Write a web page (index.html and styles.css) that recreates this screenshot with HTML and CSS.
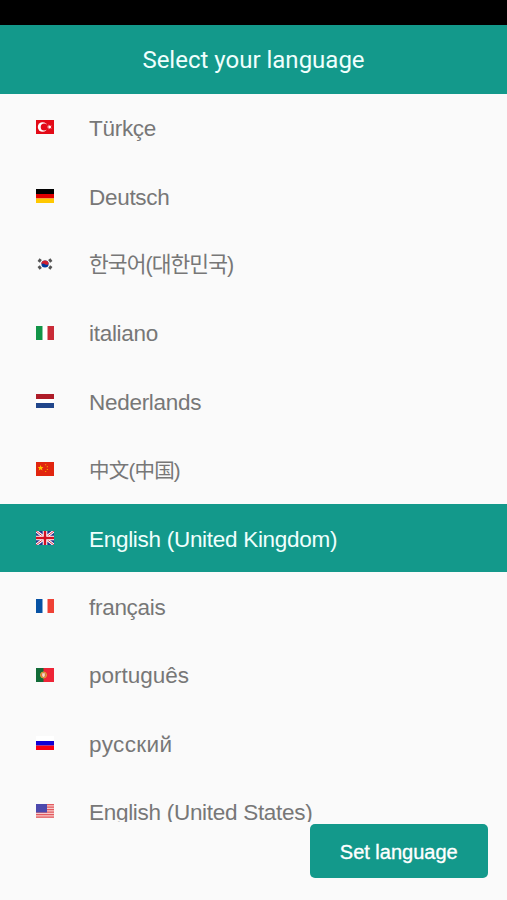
FILE: index.html
```html
<!DOCTYPE html>
<html lang="en">
<head>
<meta charset="utf-8">
<title>Select your language</title>
<link rel="stylesheet" href="styles.css">
</head>
<body>
<div class="status-bar"></div>
<header class="header"><h1 class="title">Select your language</h1></header>
<ul class="languages">
  <li class="language">
    <svg class="flag" viewBox="0 0 18 14"><path fill="#e30a17" d="M0 0h18v14H0z"/><circle cx="6.6" cy="7" r="4.8" fill="#fff"/><circle cx="8.2" cy="7" r="3.5" fill="#e30a17"/><path fill="#fff" d="M10.8 7l1.8-.6.1-1.9 1.2 1.6 1.8-.6-1.1 1.5 1.1 1.5-1.8-.6-1.2 1.6V7.6z"/></svg>
    <span class="name" lang="tr">Türkçe</span>
  </li>
  <li class="language">
    <svg class="flag" viewBox="0 0 18 14"><path d="M0 0h18v5H0z"/><path fill="#e00000" d="M0 5h18v4.5H0z"/><path fill="#ffc800" d="M0 9.5h18V14H0z"/></svg>
    <span class="name" lang="de">Deutsch</span>
  </li>
  <li class="language">
    <svg class="flag" viewBox="0 0 18 14"><circle cx="9" cy="7" r="3.6" fill="#003a9c"/><path fill="#d02030" d="M5.4 7a3.6 3.6 0 0 1 7.2 0Q10.8 8.6 9 7.2 7.2 5.8 5.4 7z"/><path stroke="#555" stroke-width="2.8" d="M2.7 4.9l2-2.8M13.3 2.1l2 2.8M2.7 9.1l2 2.8M13.3 11.9l2-2.8"/></svg>
    <span class="name korean" lang="ko">한국어(대한민국)</span>
  </li>
  <li class="language">
    <svg class="flag" viewBox="0 0 18 14"><path fill="#fff" d="M0 0h18v14H0z"/><path fill="#129447" d="M0 0h6.5v14H0z"/><path fill="#c92b37" d="M11.5 0H18v14h-6.5z"/></svg>
    <span class="name" lang="it">italiano</span>
  </li>
  <li class="language">
    <svg class="flag" viewBox="0 0 18 14"><path fill="#fff" d="M0 0h18v14H0z"/><path fill="#ae1c28" d="M0 0h18v5H0z"/><path fill="#21468b" d="M0 9h18v5H0z"/></svg>
    <span class="name" lang="nl">Nederlands</span>
  </li>
  <li class="language">
    <svg class="flag" viewBox="0 0 18 14"><path fill="#e1250f" d="M0 0h18v14H0z"/><path fill="#ffc400" d="M4.6 3l.8 2h2L5.9 6.4l.6 2.2-1.9-1.3-1.9 1.3.6-2.2L1.8 5h2z"/><path fill="#f0a000" d="M9 2.2h1.2v1H9zM10.8 4.2H12v1.1h-1.2zM10.8 7H12v1.1h-1.2zM9 9h1.2v1H9z"/></svg>
    <span class="name chinese" lang="zh-CN">中文(中国)</span>
  </li>
  <li class="language selected">
    <svg class="flag" viewBox="0 0 18 14"><path fill="#26348b" d="M0 0h18v14H0z"/><path stroke="#fff" stroke-width="2.8" d="M0 0l18 14M18 0L0 14"/><path stroke="#d52b43" stroke-width="1" d="M0 0l18 14M18 0L0 14"/><path stroke="#fff" stroke-width="4.6" d="M9 0v14M0 7h18"/><path stroke="#d31022" stroke-width="2.5" d="M9 0v14M0 7h18"/></svg>
    <span class="name">English (United Kingdom)</span>
  </li>
  <li class="language">
    <svg class="flag" viewBox="0 0 18 14"><path fill="#fff" d="M0 0h18v14H0z"/><path fill="#0752a4" d="M0 0h6.5v14H0z"/><path fill="#ef4135" d="M11.5 0H18v14h-6.5z"/></svg>
    <span class="name" lang="fr">français</span>
  </li>
  <li class="language">
    <svg class="flag" viewBox="0 0 18 14"><path fill="#ee2436" d="M0 0h18v14H0z"/><path fill="#126b37" d="M0 0h7.5v14H0z"/><circle cx="7.5" cy="7" r="3" fill="#d96d3a" stroke="#d8a83c"/><path fill="#f5d9d0" d="M6.2 5.3h2.6v2.6L7.5 9.2 6.2 7.9z"/></svg>
    <span class="name portuguese" lang="pt">português</span>
  </li>
  <li class="language">
    <svg class="flag" viewBox="0 0 18 14"><path fill="#fff" d="M0 0h18v5H0z"/><path fill="#1000d5" d="M0 5h18v4.6H0z"/><path fill="#fb0010" d="M0 9.6h18V14H0z"/></svg>
    <span class="name russian" lang="ru">русский</span>
  </li>
  <li class="language">
    <svg class="flag" viewBox="0 0 18 14"><path fill="#f7c9c9" d="M0 0h18v14H0z"/><path stroke="#e25b5f" stroke-width="1.25" d="M0 .6h18M0 3.1h18M0 5.6h18M0 8.1h18M0 10.6h18M0 13.2h18"/><path fill="#4c49ad" d="M0 0h11v8.5H0z"/></svg>
    <span class="name">English (United States)</span>
  </li>
</ul>
<footer class="footer"><button class="submit" type="button">Set language</button></footer>
</body>
</html>
```
FILE: styles.css
```css
* {
  box-sizing: border-box;
}

body {
  display: flex;
  flex-direction: column;
  height: 900px;
  margin: 0;
  overflow: hidden;
  background: #fafafa;
  color: #777;
  font-family: "Liberation Sans", Arial, sans-serif;
}

.status-bar {
  flex: 0 0 25px;
  background: #000;
}

.header {
  display: flex;
  flex: 0 0 68.7px;
  align-items: center;
  justify-content: center;
  background: #13998b;
}

.title {
  margin: 2px 0 0;
  color: #effffd;
  font: 400 24px/1 Roboto, sans-serif;
  letter-spacing: 0;
}

.languages {
  flex: 0 0 728px;
  margin: 0;
  padding: 0;
  overflow: hidden;
  list-style: none;
}

.language {
  display: flex;
  align-items: center;
  gap: 35px;
  height: 68.4px;
  padding-left: 36px;
}

.selected {
  background: #13998b;
  color: #effffd;
}

.flag {
  flex: none;
  width: 18px;
  height: 14px;
  margin-bottom: 1px;
}

.name {
  padding-top: 2.6px;
  font-size: 22.5px;
  line-height: 28px;
  letter-spacing: -0.29px;
  white-space: nowrap;
}

.korean {
  padding-top: 0;
  font-family: "Liberation Sans", "Noto Sans CJK KR", sans-serif;
  font-size: 21.5px;
  letter-spacing: -0.95px;
}

.chinese {
  font-family: "Liberation Sans", "Noto Sans CJK SC", sans-serif;
  font-size: 20.5px;
  letter-spacing: -0.8px;
}

.portuguese {
  letter-spacing: 0;
}

.russian {
  letter-spacing: 0.4px;
}

.footer {
  display: flex;
  justify-content: flex-end;
  padding: 2.5px 19.5px 0 0;
}

.submit {
  width: 177.5px;
  height: 54px;
  padding: 2px 0 0;
  border: 0;
  border-radius: 5px;
  background: #13998b;
  color: #fff;
  font: 400 20px/1 "Liberation Sans", Arial, sans-serif;
  -webkit-text-stroke: 0.35px currentColor;
}
```
